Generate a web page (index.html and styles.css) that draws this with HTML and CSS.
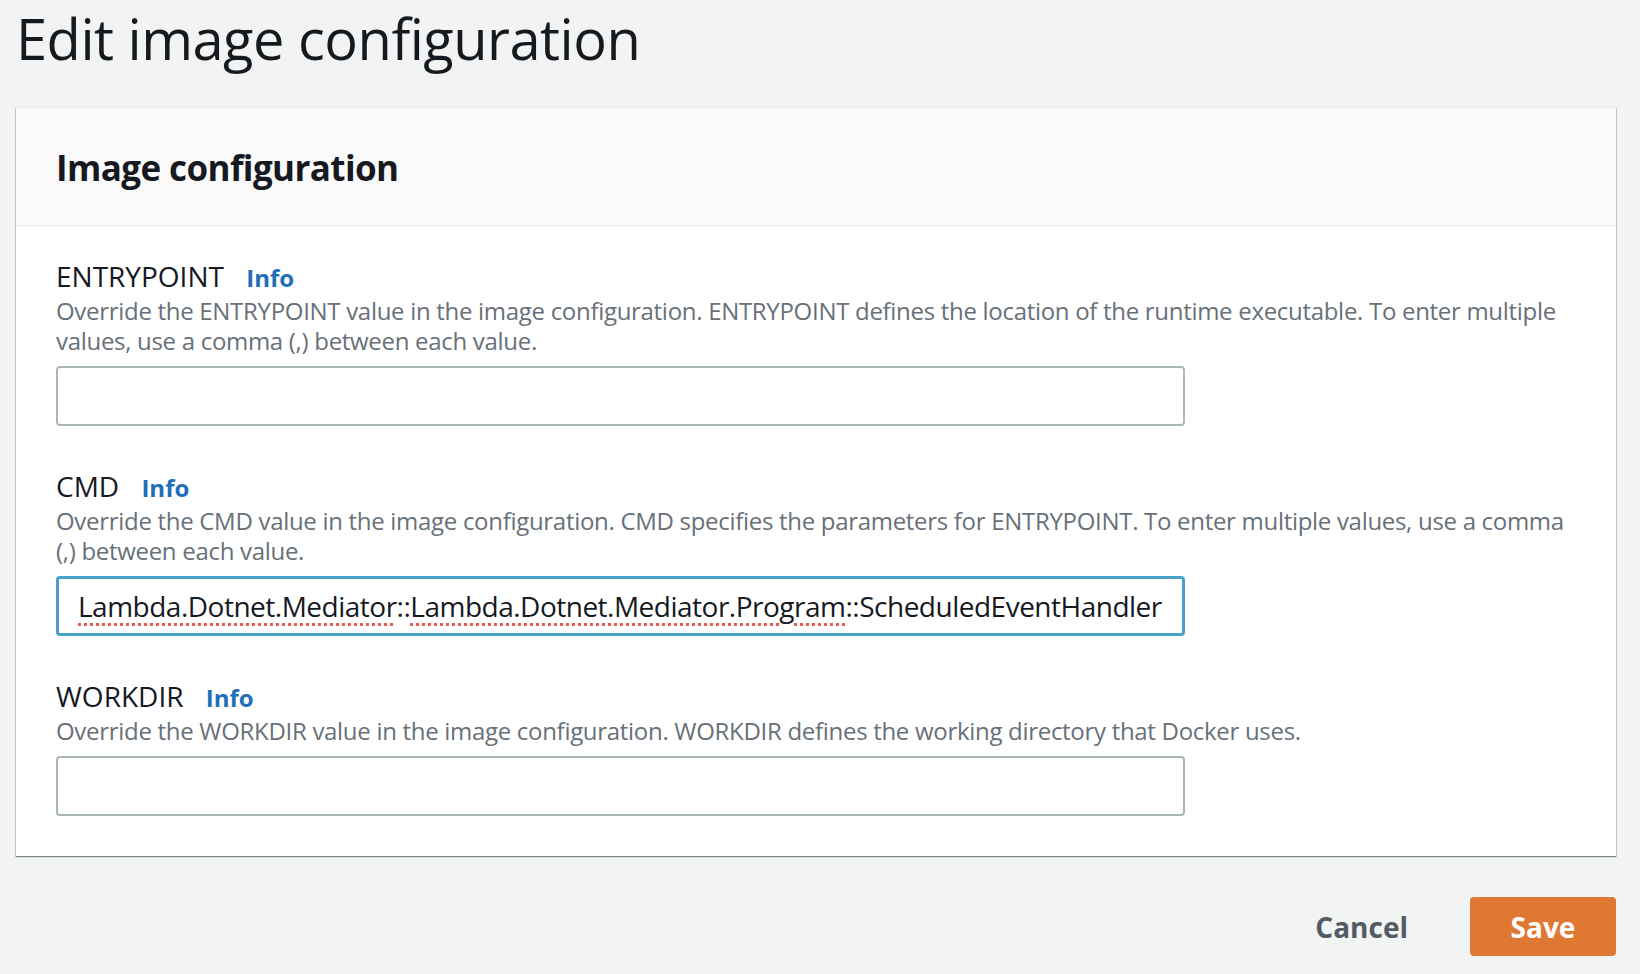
FILE: index.html
```html
<!DOCTYPE html>
<html lang="en">
<head>
<meta charset="utf-8">
<title>Edit image configuration</title>
<link rel="stylesheet" href="styles.css">
</head>
<body>
<main class="page">
  <h1 class="page-title">Edit image configuration</h1>
  <section class="card">
    <header class="card-header">
      <h2 class="card-title">Image configuration</h2>
    </header>
    <div class="card-body">
      <div class="field">
        <div class="field-label">ENTRYPOINT <a class="info" href="#">Info</a></div>
        <p class="field-desc">Override the ENTRYPOINT value in the image configuration. ENTRYPOINT defines the location of the runtime executable. To enter multiple values, use a comma (,) between each value.</p>
        <div class="input"></div>
      </div>
      <div class="field">
        <div class="field-label">CMD <a class="info" href="#">Info</a></div>
        <p class="field-desc">Override the CMD value in the image configuration. CMD specifies the parameters for ENTRYPOINT. To enter multiple values, use a comma (,) between each value.</p>
        <div class="input focused" role="textbox"><span class="misspelled">Lambda.Dotnet.Mediator</span>::<span class="misspelled">Lambda.Dotnet.Mediator.Program</span>::ScheduledEventHandler</div>
      </div>
      <div class="field">
        <div class="field-label">WORKDIR <a class="info" href="#">Info</a></div>
        <p class="field-desc">Override the WORKDIR value in the image configuration. WORKDIR defines the working directory that Docker uses.</p>
        <div class="input"></div>
      </div>
    </div>
  </section>
  <div class="actions">
    <button class="btn btn-link">Cancel</button>
    <button class="btn btn-primary">Save</button>
  </div>
</main>
</body>
</html>
```
FILE: styles.css
```css
html, body {
  margin: 0;
  padding: 0;
  background: #f2f3f3;
}
body {
  font-family: "Open Sans", "Noto Sans", sans-serif;
  color: #16191f;
}
.page {
  padding: 0 24px 0 16px;
}
.page-title {
  margin: 0 0 31px 0;
  font-size: 56px;
  line-height: 76px;
  font-weight: 400;
  letter-spacing: -0.5px;
  color: #16191f;
}
.card {
  background: #fff;
  border-top: 1px solid #eaeded;
  box-shadow: 0 1px 1px 0 rgba(0, 28, 36, 0.3), 1px 1px 1px 0 rgba(0, 28, 36, 0.15), -1px 1px 1px 0 rgba(0, 28, 36, 0.15);
}
.card-header {
  background: #fafafa;
  border-bottom: 1px solid #eaeded;
  padding: 38px 40px 35px;
}
.card-title {
  margin: 0;
  font-size: 35px;
  line-height: 44px;
  font-weight: 700;
  letter-spacing: -0.6px;
}
.card-body {
  padding: 32px 40px 40px;
  display: flex;
  flex-direction: column;
  gap: 42px;
}
.field {
  display: flex;
  flex-direction: column;
}
.field-label {
  font-size: 28px;
  line-height: 36px;
  color: #16191f;
}
.info {
  margin-left: 15px;
  font-size: 24px;
  line-height: 1;
  color: #1f6fb8;
  font-weight: 700;
  text-decoration: none;
}
.field-desc {
  margin: 2px 0 10px;
  font-size: 24px;
  line-height: 30px;
  color: #687078;
  letter-spacing: -0.3px;
}
.input {
  box-sizing: border-box;
  width: 1129px;
  height: 60px;
  border: 2px solid #aab7b8;
  border-radius: 4px;
  background: #fff;
  padding: 0 20px;
  font-size: 28px;
  line-height: 56px;
  color: #16191f;
  letter-spacing: -0.5px;
  white-space: nowrap;
  overflow: hidden;
}
.input.focused {
  border: 3px solid #49a1c9;
  padding: 0 19px;
  line-height: 54px;
}
.misspelled {
  text-decoration: underline dotted #ea5b50;
  text-decoration-thickness: 3px;
  text-underline-offset: 6px;
}
.actions {
  display: flex;
  justify-content: flex-end;
  align-items: center;
  gap: 62px;
  margin-top: 41px;
}
.btn {
  font-family: inherit;
  font-size: 28px;
  font-weight: 700;
  border: none;
  cursor: pointer;
}
.btn-link {
  background: none;
  color: #545b64;
  padding: 0;
}
.btn-primary {
  width: 146px;
  height: 59px;
  border-radius: 4px;
  background: #df7833;
  color: #fff;
}
```
